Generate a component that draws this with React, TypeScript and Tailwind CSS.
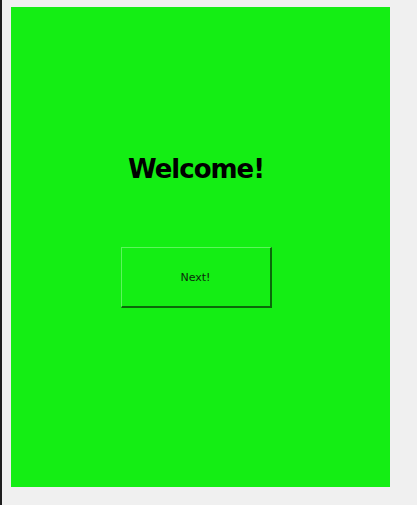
import React from "react";

export default function App() {
  return (
    <div className="w-[417px] h-[505px] bg-[#f0f0f0] flex overflow-hidden">
      <div className="w-[2px] h-full bg-[#1e1e1e]" />
      <div className="pl-[9px] pt-[7px]">
        <div className="w-[379px] h-[480px] bg-[#14ee14] flex flex-col items-center">
          <div
            className="mt-[142px] ml-[-9px] text-[26px] leading-[40px] font-bold text-black tracking-[-1px]"
            style={{ fontFamily: '"DejaVu Sans", Verdana, sans-serif' }}
          >
            Welcome!
          </div>
          <button
            className="mt-[58px] ml-[-9px] w-[151px] h-[61px] pt-[3px] bg-[#14ee14] flex items-center justify-center border-t border-l border-t-[#5cf55c] border-l-[#5cf55c] border-b-2 border-r-2 border-b-[#0a6a0a] border-r-[#0a6a0a] text-[11px] text-[#0b2b0b]"
            style={{ fontFamily: '"DejaVu Sans", Tahoma, sans-serif' }}
          >
            Next!
          </button>
        </div>
      </div>
    </div>
  );
}
